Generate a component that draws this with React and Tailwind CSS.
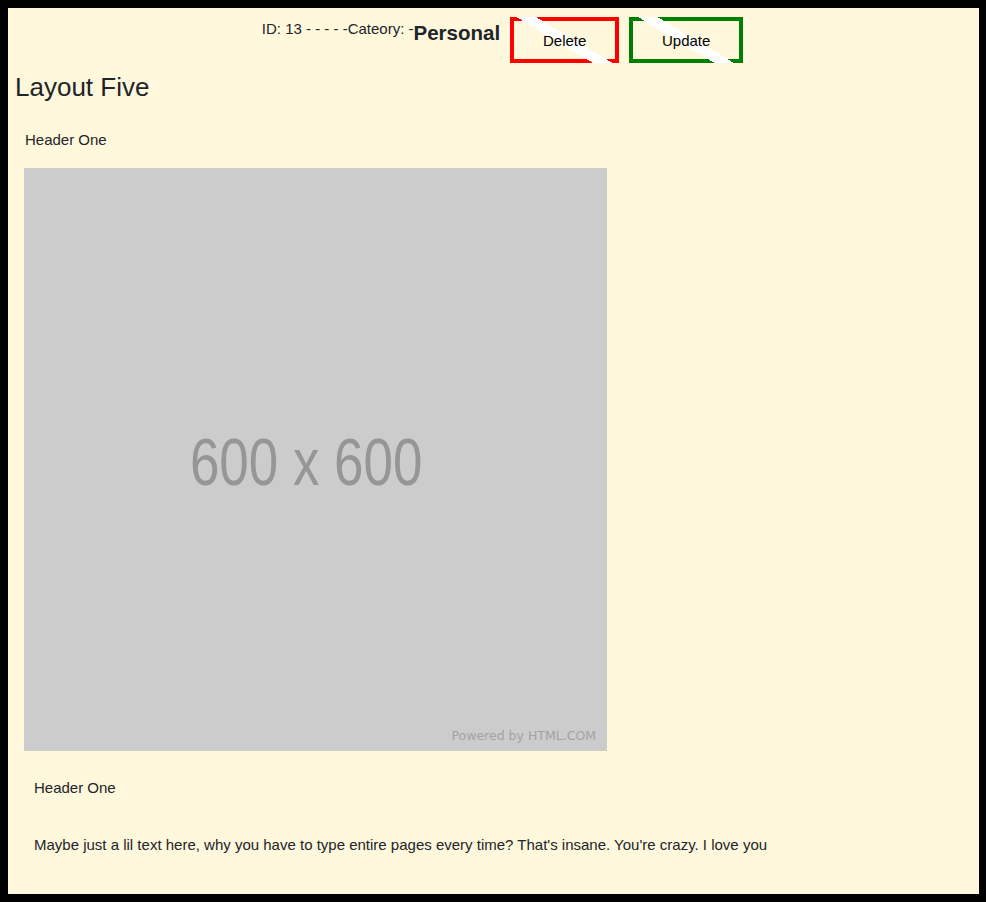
import React from "react";

const stripe =
  "bg-[linear-gradient(31deg,transparent_calc(50%-5px),#fff_calc(50%-5px),#fff_calc(50%+5px),transparent_calc(50%+5px))]";

function StripedButton({ label, border, width }) {
  return (
    <button
      className={`relative h-[46px] ${width} border-4 ${border} bg-transparent text-[15px] text-black`}
    >
      <span className={`pointer-events-none absolute -inset-1 ${stripe}`} />
      <span className="relative pt-[2px] block">{label}</span>
    </button>
  );
}

export default function App() {
  return (
    <div className="h-[902px] bg-black p-2 font-['Liberation_Sans',Arial,sans-serif] text-[#212529]">
      <div className="h-full w-[971px] bg-[#fff8dc]">
        {/* top bar */}
        <div className="flex items-start justify-center pl-[18px] pt-[9px]">
          <span className="mt-[4px] text-[15px] leading-4">
            ID: 13 - - - - -Cateory: -
          </span>
          <span className="mt-[4px] text-[20.5px] font-bold leading-6">Personal</span>
          <div className="ml-[10px] flex gap-[10px]">
            <StripedButton label="Delete" border="border-[#f00]" width="w-[109px]" />
            <StripedButton label="Update" border="border-[#008000]" width="w-[114px]" />
          </div>
        </div>

        <h1 className="mt-[9px] pl-[7px] text-[26px] leading-[30px]">Layout Five</h1>

        <div className="pl-[17px] pt-[29px] text-[15px] leading-[18px]">Header One</div>

        <div className="relative ml-[16px] mt-[19px] flex h-[583px] w-[583px] items-center justify-center bg-[#cccccc]">
          <span className="-ml-[18px] mt-[3px] scale-x-[0.79] text-[67px] leading-none text-[#969696]">
            600 x 600
          </span>
          <span className="absolute bottom-[5px] right-[11px] font-['DejaVu_Sans',sans-serif] text-[12.5px] text-[#a3a3a3]">
            Powered by HTML.COM
          </span>
        </div>

        <div className="pl-[26px] pt-[28px] text-[15px] leading-[18px]">Header One</div>

        <p className="pl-[26px] pt-[39px] text-[15px] leading-[18px]">
          Maybe just a lil text here, why you have to type entire pages every time? That's insane.
          You're crazy. I love you
        </p>
      </div>
    </div>
  );
}
